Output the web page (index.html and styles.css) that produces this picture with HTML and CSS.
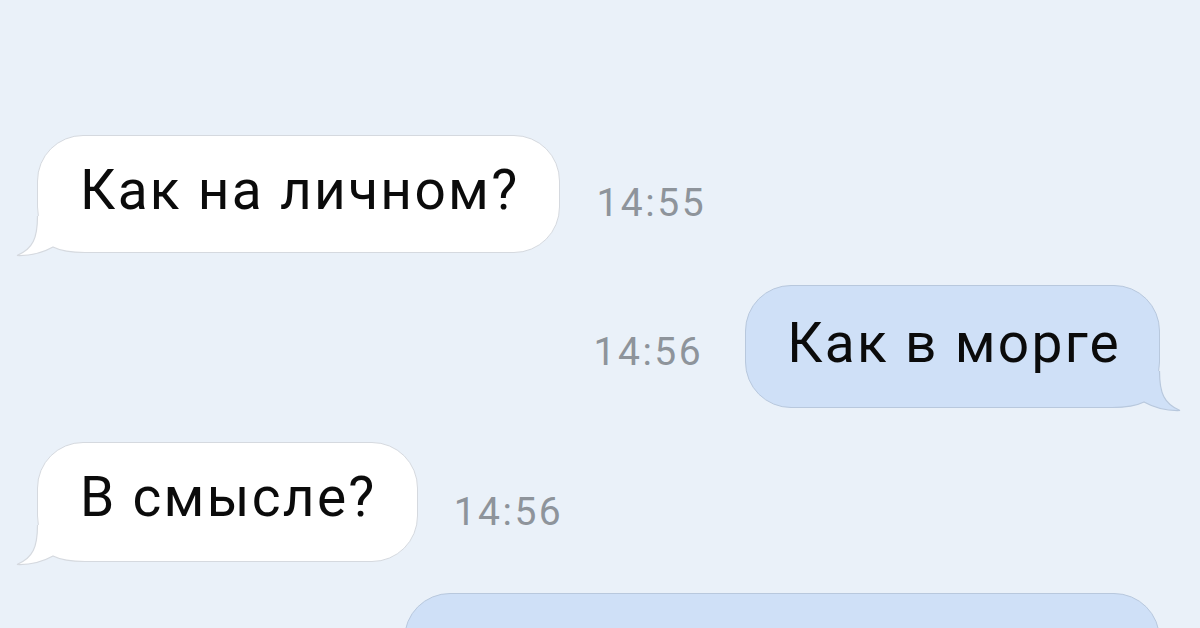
FILE: index.html
```html
<!DOCTYPE html>
<html lang="ru">

<head>
    <meta charset="UTF-8" />
    <meta name="viewport" content="width=device-width, initial-scale=1.0" />
    <link rel="stylesheet" href="styles.css">
    <title>Чат</title>
</head>

<body>
    <div class="chat">
        <div class="row in">
            <div class="bubble">Как на личном?
                <svg class="tail" viewBox="0 0 70 40" width="70" height="40">
                    <path class="tail-fill" d="M22.5,0 C22.5,22 18,33 2,39.5 C16,40 29,36 38,31 C46,35 55,36.5 70,36.5 L70,0 Z" />
                    <path class="tail-line" d="M22.5,0 C22.5,22 18,33 2,39.5 C16,40 29,36 38,31 C46,35 55,36.5 70,36.5" />
                </svg>
            </div>
            <span class="time">14:55</span>
        </div>

        <div class="row out">
            <span class="time">14:56</span>
            <div class="bubble">Как в морге
                <svg class="tail" viewBox="0 0 70 40" width="70" height="40">
                    <path class="tail-fill" d="M22.5,0 C22.5,22 18,33 2,39.5 C16,40 29,36 38,31 C46,35 55,36.5 70,36.5 L70,0 Z" />
                    <path class="tail-line" d="M22.5,0 C22.5,22 18,33 2,39.5 C16,40 29,36 38,31 C46,35 55,36.5 70,36.5" />
                </svg>
            </div>
        </div>

        <div class="row in">
            <div class="bubble tall">В смысле?
                <svg class="tail" viewBox="0 0 70 40" width="70" height="40">
                    <path class="tail-fill" d="M22.5,0 C22.5,22 18,33 2,39.5 C16,40 29,36 38,31 C46,35 55,36.5 70,36.5 L70,0 Z" />
                    <path class="tail-line" d="M22.5,0 C22.5,22 18,33 2,39.5 C16,40 29,36 38,31 C46,35 55,36.5 70,36.5" />
                </svg>
            </div>
            <span class="time">14:56</span>
        </div>

        <div class="row out last">
            <div class="bubble wide">Тихо, спокойно, холодно</div>
        </div>
    </div>
</body>

</html>
```

FILE: styles.css
```css
* {
    margin: 0;
    padding: 0;
    box-sizing: border-box;
}

body {
    height: 628px;
    overflow: hidden;
    background: #eaf1f9;
    font-family: 'Roboto', 'Liberation Sans', sans-serif;
}

.chat {
    display: flex;
    flex-direction: column;
    gap: 32px;
    padding: 135px 40px 0 37px;
}

.row {
    display: flex;
    align-items: flex-end;
}

.row.out {
    justify-content: flex-end;
}

.row.out + .row {
    margin-top: 2px;
}

.row.last {
    margin-top: -1px;
}

.bubble {
    position: relative;
    height: 118px;
    padding: 23px 40px 0 42px;
    border: 1px solid #d5d9df;
    border-radius: 46px;
    background: #fff;
    color: #0b0b0b;
    font-size: 55px;
    line-height: 62px;
    letter-spacing: 2.3px;
    white-space: nowrap;
}

.bubble.tall {
    height: 120px;
}

.out .bubble {
    height: 123px;
    background: #cfe0f7;
    border-color: #b8c8dd;
    padding: 26px 38px 0 41px;
}

.bubble.wide {
    width: 756px;
    padding-left: 40px;
}

.tail {
    position: absolute;
    left: -23px;
    bottom: -4px;
    overflow: visible;
}

.out .tail {
    left: auto;
    right: -23px;
    transform: scaleX(-1);
}

.tail-fill {
    fill: #fff;
}

.tail-line {
    fill: none;
    stroke: #d5d9df;
    stroke-width: 1.2;
}

.out .tail-fill {
    fill: #cfe0f7;
}

.out .tail-line {
    stroke: #b8c8dd;
}

.time {
    color: #8e949b;
    font-size: 39px;
    line-height: 39px;
    letter-spacing: 2.5px;
    margin-bottom: 30px;
}

.in .time {
    margin-left: 36px;
}

.out .time {
    margin-right: 42px;
    margin-bottom: 36px;
}
```
